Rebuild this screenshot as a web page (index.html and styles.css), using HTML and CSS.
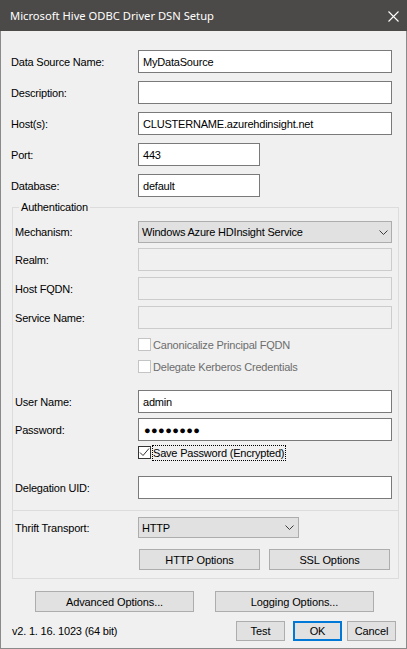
FILE: index.html
```html
<!DOCTYPE html>
<html>
<head>
<meta charset="utf-8">
<title>Microsoft Hive ODBC Driver DSN Setup</title>
<link rel="stylesheet" href="styles.css">
</head>
<body>
<div class="window">
  <div class="titlebar">
    <span class="title">Microsoft Hive ODBC Driver DSN Setup</span>
    <svg class="close" width="11" height="11" viewBox="0 0 11 11"><path d="M0.5 0.5 L10.5 10.5 M10.5 0.5 L0.5 10.5" stroke="#ffffff" stroke-width="1.1" fill="none"/></svg>
  </div>
  <div class="content">
    <div class="top-fields">
      <div class="row"><span class="label">Data Source Name:</span><div class="field">MyDataSource</div></div>
      <div class="row"><span class="label">Description:</span><div class="field"></div></div>
      <div class="row"><span class="label">Host(s):</span><div class="field">CLUSTERNAME.azurehdinsight.net</div></div>
      <div class="row"><span class="label">Port:</span><div class="field short">443</div></div>
      <div class="row"><span class="label">Database:</span><div class="field short">default</div></div>
    </div>

    <fieldset class="group">
      <legend>Authentication</legend>
      <div class="g-section">
        <div class="g-row combo-row"><span class="label">Mechanism:</span>
          <div class="combo"><span>Windows Azure HDInsight Service</span><svg class="chev" width="9" height="5" viewBox="0 0 9 5"><polyline points="0.5,0.5 4.5,4.5 8.5,0.5" fill="none" stroke="#3c3c3c" stroke-width="1"/></svg></div>
        </div>
        <div class="g-row"><span class="label">Realm:</span><div class="field disabled"></div></div>
        <div class="g-row"><span class="label">Host FQDN:</span><div class="field disabled"></div></div>
        <div class="g-row"><span class="label">Service Name:</span><div class="field disabled"></div></div>
      </div>
      <div class="g-section checks">
        <div class="cb-row disabled"><span class="box"></span><span class="cb-label">Canonicalize Principal FQDN</span></div>
        <div class="cb-row disabled"><span class="box"></span><span class="cb-label">Delegate Kerberos Credentials</span></div>
      </div>
      <div class="g-section creds">
        <div class="g-row"><span class="label">User Name:</span><div class="field">admin</div></div>
        <div class="g-row"><span class="label">Password:</span><div class="field"><span class="dots">●●●●●●●●</span></div></div>
        <div class="cb-row"><span class="box checked"><svg width="11" height="11" viewBox="0 0 11 11"><polyline points="1,5.5 4,8.5 10,1.5" fill="none" stroke="#333333" stroke-width="1"/></svg></span><span class="cb-label focus">Save Password (Encrypted)</span></div>
      </div>
      <div class="g-row deleg"><span class="label">Delegation UID:</span><div class="field"></div></div>
      <div class="divider"></div>
      <div class="g-row thrift"><span class="label">Thrift Transport:</span>
        <div class="combo narrow"><span>HTTP</span><svg class="chev" width="9" height="5" viewBox="0 0 9 5"><polyline points="0.5,0.5 4.5,4.5 8.5,0.5" fill="none" stroke="#3c3c3c" stroke-width="1"/></svg></div>
      </div>
      <div class="btn-row">
        <button class="btn wide">HTTP Options</button>
        <button class="btn wide">SSL Options</button>
      </div>
    </fieldset>

    <div class="options-row">
      <button class="btn opt">Advanced Options...</button>
      <button class="btn opt">Logging Options...</button>
    </div>

    <div class="footer">
      <span class="version">v2. 1. 16. 1023 (64 bit)</span>
      <div class="actions">
        <button class="btn small">Test</button>
        <button class="btn small default">OK</button>
        <button class="btn small cancel">Cancel</button>
      </div>
    </div>
  </div>
</div>
</body>
</html>
```

FILE: styles.css
```css
* {
  box-sizing: border-box;
}

html, body {
  margin: 0;
  padding: 0;
  background: #f0f0f0;
}

body {
  font-family: "Liberation Sans", Arial, sans-serif;
  font-size: 11px;
  color: #000000;
}

.window {
  width: 407px;
  height: 649px;
  border: 1px solid #8a8a8a;
  border-top: 0;
  background: #f0f0f0;
  display: flex;
  flex-direction: column;
}

.titlebar {
  height: 31px;
  margin: 0 -1px;
  background: #4c4a48;
  color: #ffffff;
  display: flex;
  align-items: center;
  justify-content: space-between;
  padding: 0 8px 0 10px;
}

.title {
  font-family: "Noto Sans", "Open Sans", sans-serif;
  font-size: 11.2px;
}

.close {
  display: block;
  margin-top: 1px;
}

.content {
  padding: 19px 7px 0 10px;
  display: flex;
  flex-direction: column;
}

.top-fields {
  display: flex;
  flex-direction: column;
  gap: 8px;
  margin-right: 7px;
}

.row, .g-row {
  display: flex;
  align-items: center;
  height: 23px;
}

.label {
  width: 127px;
  flex-shrink: 0;
  letter-spacing: -0.2px;
}

.g-row .label {
  width: 123px;
}

.field {
  flex: 1;
  height: 23px;
  border: 1px solid #7a7a7a;
  background: #ffffff;
  padding-left: 4px;
  display: flex;
  align-items: center;
  letter-spacing: -0.2px;
}

.field.short {
  flex: none;
  width: 122px;
}

.field.disabled {
  background: #f0f0f0;
  border-color: #cccccc;
}

.dots {
  font-size: 11px;
  letter-spacing: 0.4px;
  padding-left: 1px;
}

.group {
  margin: 3px 0 0 1px;
  padding: 7px 6px 8px 2px;
  border: 1px solid #dcdcdc;
  min-width: 0;
  display: flex;
  flex-direction: column;
}

.group legend {
  margin-left: 4px;
  padding: 0 2px;
  line-height: 14px;
  font-size: 11px;
  letter-spacing: -0.2px;
}

.g-section {
  display: flex;
  flex-direction: column;
  gap: 6px;
}

.combo-row {
  height: 22px;
  margin-bottom: -1px;
}

.combo {
  flex: 1;
  height: 22px;
  background: #e1e1e1;
  border: 1px solid #adadad;
  display: flex;
  align-items: center;
  justify-content: space-between;
  padding: 0 3px 0 3px;
  letter-spacing: -0.2px;
}

.combo.narrow {
  flex: none;
  width: 161px;
  height: 21px;
  padding-right: 4px;
}

.chev {
  display: block;
}

.checks {
  margin-top: 9px;
  gap: 9px;
}

.cb-row {
  display: flex;
  align-items: center;
  height: 13px;
  margin-left: 123px;
  gap: 1px;
}

.box {
  width: 13px;
  height: 13px;
  border: 1px solid #333333;
  background: #ffffff;
  flex-shrink: 0;
  display: flex;
  align-items: center;
  justify-content: center;
}

.box svg {
  display: block;
}

.cb-label {
  border: 1px dotted transparent;
  padding: 1px 1px 1px 0;
  line-height: 12px;
  letter-spacing: -0.2px;
}

.cb-label.focus {
  border-color: #000000;
}

.cb-row.disabled .box {
  border-color: #c4c4c4;
}

.cb-row.disabled .cb-label {
  color: #6d6d6d;
}

.creds {
  margin-top: 17px;
  gap: 5px;
}

.deleg {
  margin-top: 17px;
}

.divider {
  height: 1px;
  background: #dcdcdc;
  margin: 11px -6px 6px -2px;
}

.thrift {
  height: 21px;
}

.btn {
  font-family: "Liberation Sans", Arial, sans-serif;
  font-size: 11px;
  letter-spacing: -0.1px;
  color: #000000;
  background: #e1e1e1;
  border: 1px solid #adadad;
  padding: 0;
  margin: 0;
  height: 21px;
}

.btn-row {
  display: flex;
  gap: 9px;
  margin: 11px 0 0 124px;
}

.btn.wide {
  width: 121px;
}

.options-row {
  display: flex;
  gap: 21px;
  margin: 12px 0 0 24px;
}

.btn.opt {
  width: 159px;
}

.footer {
  display: flex;
  align-items: center;
  margin-top: 9px;
  height: 20px;
  padding-left: 1px;
}

.version {
  letter-spacing: -0.2px;
}

.actions {
  margin-left: auto;
  margin-right: 3px;
  display: flex;
}

.btn.small {
  width: 49px;
  height: 20px;
}

.btn.default {
  border: 2px solid #0078d7;
  margin-left: 8px;
}

.btn.cancel {
  margin-left: 5px;
}
```
